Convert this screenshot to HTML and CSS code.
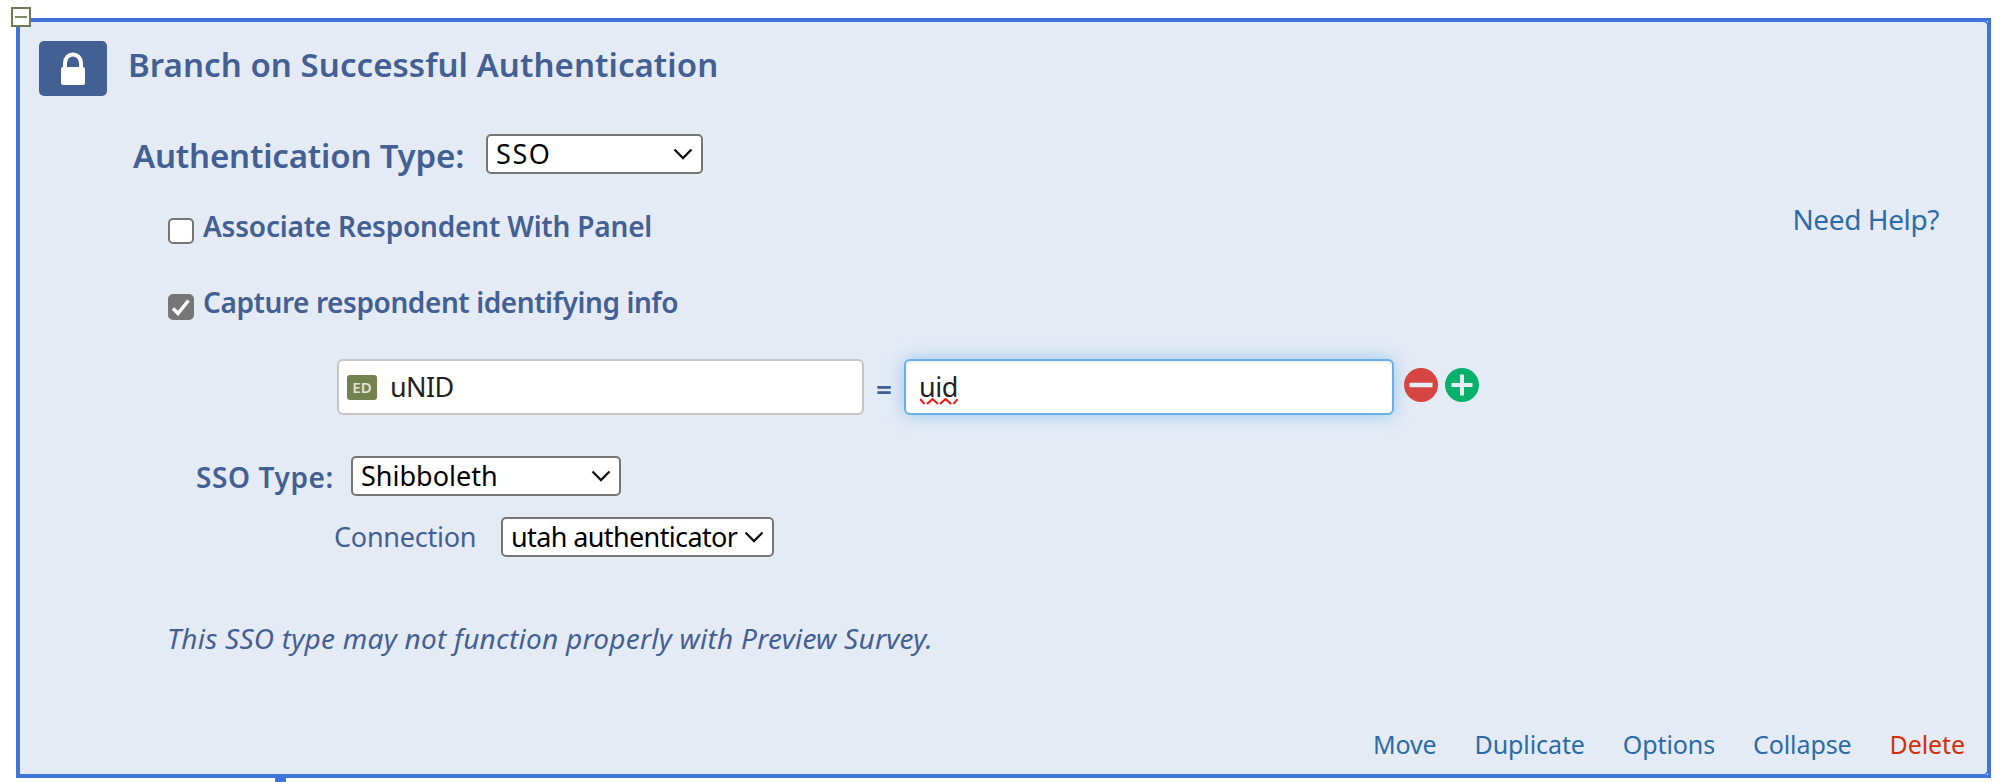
FILE: index.html
```html
<!DOCTYPE html>
<html lang="en">
<head>
<meta charset="utf-8">
<title>Survey Flow</title>
<link rel="stylesheet" href="styles.css">
</head>
<body>
<div class="flow">
  <section class="panel">
    <button class="toggle" aria-label="Collapse branch"></button>
    <header class="head">
      <span class="lock">
        <svg width="26" height="34" viewBox="0 0 26 34"><path d="M5 16V11a8 8.500 0 0 1 16 0V16" fill="none" stroke="#fff" stroke-width="4"/><rect x="1" y="15" width="24" height="18" rx="2" fill="#fff"/></svg>
      </span>
      <h1 class="title">Branch on Successful Authentication</h1>
    </header>

    <div class="row auth">
      <span class="auth-label">Authentication Type:</span>
      <div class="select select-auth"><span class="sso">SSO</span><svg class="chev" viewBox="0 0 20 12"><path d="M1.500 1.500 10 10 18.500 1.500"/></svg></div>
    </div>

    <div class="row associate">
      <span class="check"></span>
      <span class="opt opt-a">Associate Respondent With Panel</span>
      <a class="help">Need Help?</a>
    </div>

    <div class="row capture">
      <span class="check on"><svg viewBox="0 0 26 26"><path d="M5 14.500 10 19.500 20.500 6.500"/></svg></span>
      <span class="opt opt-c">Capture respondent identifying info</span>
    </div>

    <div class="row fields">
      <div class="field field-name"><span class="ed">ED</span><span class="unid">uNID</span></div>
      <span class="eq">=</span>
      <div class="field field-value"><span class="typo">uid<svg class="squiggle" viewBox="0 0 38 7"><path d="M0 1 4.500 6M7 6 12.500 1 18 6M20 6 25.500 1 31 6M33.500 6 37.500 1"/></svg></span></div>
      <svg class="round minus" viewBox="0 0 34 34"><circle cx="17" cy="17" r="17" fill="#d64541"/><path d="M5.500 17h23" stroke="#e8ecf5" stroke-width="4.500"/></svg>
      <svg class="round" viewBox="0 0 34 34"><circle cx="17" cy="17" r="17" fill="#06b26b"/><path d="M6.500 17h21M17 6.500v21" stroke="#e8ecf5" stroke-width="4"/></svg>
    </div>

    <div class="row sso-type">
      <span class="sso-label">SSO Type:</span>
      <div class="select select-type"><span>Shibboleth</span><svg class="chev" viewBox="0 0 20 12"><path d="M1.500 1.500 10 10 18.500 1.500"/></svg></div>
    </div>

    <div class="row connection">
      <span class="conn-label">Connection</span>
      <div class="select select-conn"><span class="utah">utah authenticator</span><svg class="chev" viewBox="0 0 20 12"><path d="M1.500 1.500 10 10 18.500 1.500"/></svg></div>
    </div>

    <p class="note">This SSO type may not function properly with Preview Survey.</p>

    <nav class="actions">
      <a>Move</a><a>Duplicate</a><a>Options</a><a>Collapse</a><a class="delete">Delete</a>
    </nav>
  </section>
  <div class="connector"></div>
</div>
</body>
</html>
```

FILE: styles.css
```css
* { box-sizing: border-box; }
body { margin: 0; background: #fff; font-family: "Noto Sans", sans-serif; color: #426094; overflow: hidden; }
.flow { height: 782px; padding: 18px 9px 0 16px; }
.panel { position: relative; z-index: 0; height: 760px; border: 3px solid #3f74da; padding: 1px; background: #fff; display: flex; flex-direction: column; }
.panel::before { content: ""; position: absolute; inset: -1px; z-index: -1; border: 2px solid #3f74da; border-radius: 0 6px 6px 0; background: #e5ebf5; }
.toggle { position: absolute; left: -8px; top: -14px; width: 20px; height: 20px; padding: 0; border: 2.500px solid #6f7859; border-radius: 0; background: #fff; display: flex; align-items: center; justify-content: center; }
.toggle::after { content: ""; width: 12px; height: 2px; background: #808a6c; }
.head { display: flex; padding: 19px 0 0 19px; height: 112px; }
.lock { width: 68px; height: 55px; border-radius: 5px; background: #426094; display: flex; align-items: center; justify-content: center; }
.title { margin: 0 0 0 21px; font-size: 33px; font-weight: 600; line-height: 48px; letter-spacing: .06px; }
.row { display: flex; align-items: flex-start; }
.select { height: 40px; border: 2px solid #767676; border-radius: 5px; background: #fff; color: #000; font-size: 27px; line-height: 34px; display: flex; align-items: center; justify-content: space-between; padding: 0 8px; white-space: nowrap; }
.select > span { margin-top: -1px; }
.chev { width: 20px; height: 12px; fill: none; stroke: #111; stroke-width: 2.300; flex: none; }
.auth { height: 84px; padding-left: 113px; }
.auth-label { width: 353px; font-size: 33px; font-weight: 600; line-height: 43px; letter-spacing: -.18px; }
.select-auth { width: 217px; }
.sso { letter-spacing: 1.600px; }
.associate { height: 76px; padding: 0 48px 0 148px; }
.capture { height: 65px; padding-left: 148px; }
.check { width: 26px; height: 26px; border: 2px solid #767676; border-radius: 5px; background: #fff; flex: none; }
.on { background: #767676; }
.on svg { display: block; width: 26px; height: 26px; margin: -2px; fill: none; stroke: #fff; stroke-width: 3.500; }
.opt { margin-left: 9px; font-size: 28px; line-height: 38px; margin-top: -11px; font-weight: 600; white-space: nowrap; }
.opt-a { letter-spacing: -.2px; }
.opt-c { letter-spacing: -.42px; }
.help { margin: -18px 0 0 auto; font-size: 28px; line-height: 38px; letter-spacing: -.4px; color: #2b6ca8; }
.fields { height: 97px; padding-left: 317px; }
.field { height: 56px; border: 2px solid #c4c4c4; border-radius: 6px; background: #fff; color: #222; font-size: 27px; line-height: 52px; display: flex; align-items: center; }
.field-name { width: 527px; padding-left: 8px; }
.unid { letter-spacing: -.6px; }
.ed { width: 30px; height: 25px; margin-right: 13px; border-radius: 3px; background: #748250; color: #dfe4d4; font-size: 15px; font-weight: 600; line-height: 25px; text-align: center; }
.eq { width: 40px; text-align: center; font-size: 28px; font-weight: 600; line-height: 60px; }
.field-value { width: 490px; padding-left: 13px; border-color: #66afe9; box-shadow: inset 0 2px 3px rgba(0,0,0,.075), 0 0 18px rgba(102,175,233,.6); }
.typo { position: relative; letter-spacing: -.5px; }
.squiggle { position: absolute; left: 1px; top: 37px; width: 38px; height: 7px; fill: none; stroke: #f11; stroke-width: 2; }
.round { width: 34px; height: 34px; margin: 9px 0 0 7px; }
.minus { margin-left: 10px; }
.sso-type { height: 61px; padding-left: 176px; }
.sso-label { width: 155px; font-size: 28px; font-weight: 600; line-height: 42px; letter-spacing: .6px; }
.select-type { width: 270px; }
.connection { height: 104px; padding-left: 314px; }
.conn-label { width: 167px; font-size: 27px; line-height: 40px; letter-spacing: -.25px; }
.select-conn { width: 273px; }
.utah { letter-spacing: -.62px; }
.note { margin: -2px 0 0 147px; font-size: 28px; line-height: 38px; letter-spacing: .24px; font-style: italic; white-space: nowrap; }
.actions { display: flex; gap: 38px; margin: auto 22px 12px auto; font-size: 25px; line-height: 36px; letter-spacing: -.1px; color: #2b6ca8; }
.delete { color: #d32f0b; }
.connector { width: 11px; height: 4px; margin-left: 259px; background: #3f74da; }
```
